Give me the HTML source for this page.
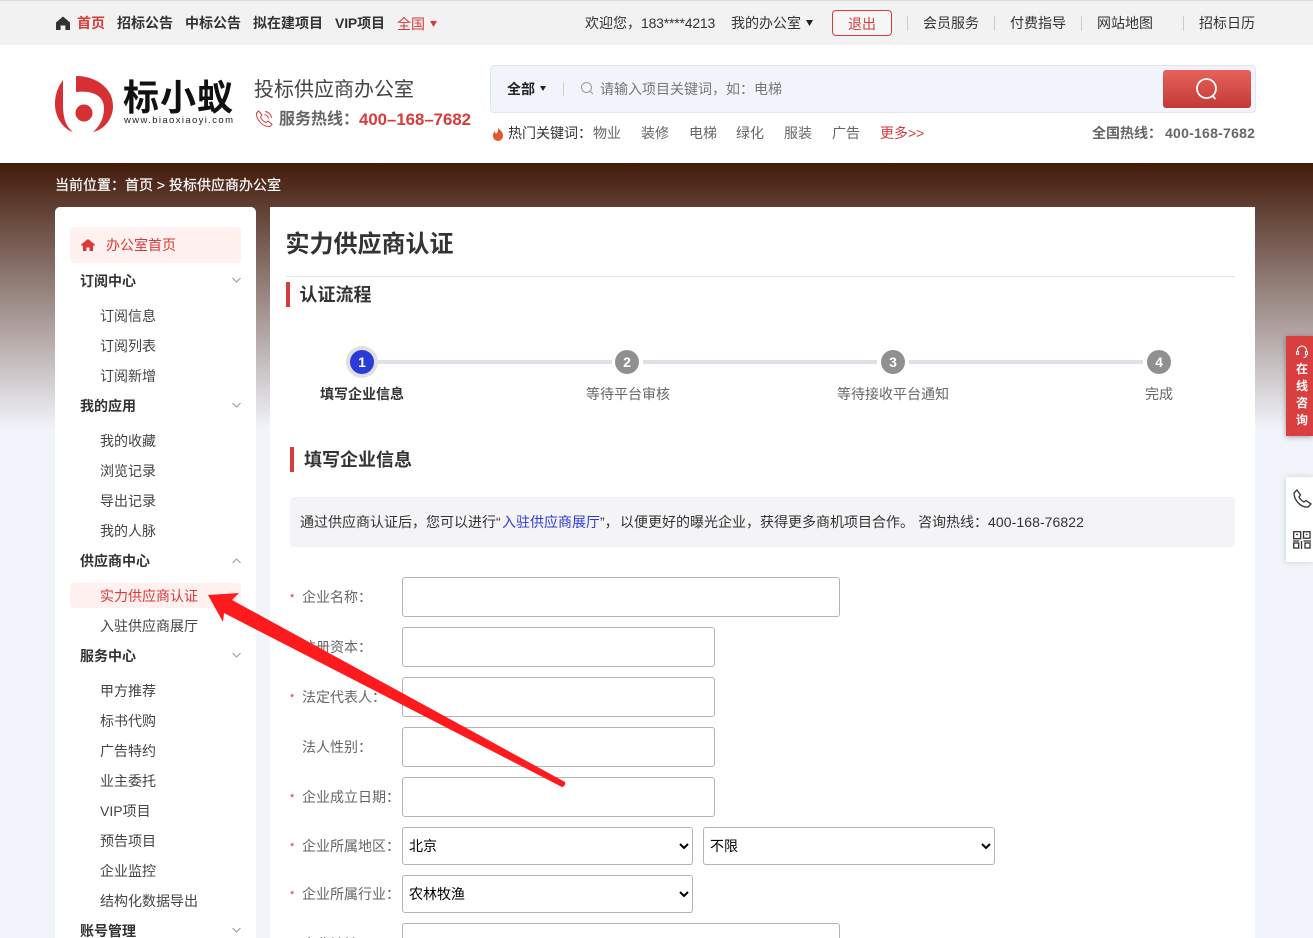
<!DOCTYPE html>
<html lang="zh-CN">
<head>
<meta charset="utf-8">
<title>投标供应商办公室</title>
<style>
*{box-sizing:border-box;margin:0;padding:0}
html,body{width:1313px;height:938px;overflow:hidden;background:#f1f5fb}
body{position:relative;font-family:"Liberation Sans","Noto Sans CJK SC",sans-serif;font-size:14px;color:#333}
.a{position:absolute;white-space:nowrap;line-height:20px}
.b{font-weight:700}
.r{color:#d93a3a}
.g{color:#666}
#top{position:absolute;left:0;top:0;width:1313px;height:45px;background:#f2f2f2;border-top:1px solid #ddd}
#hd{position:absolute;left:0;top:45px;width:1313px;height:118px;background:#fff}
#bg{position:absolute;left:0;top:163px;width:1313px;height:267px;background:linear-gradient(#431a0a 0,#f1f5fb 100%)}
.sep{position:absolute;width:1px;height:15px;background:#ccc;top:16px}
#search{position:absolute;left:490px;top:65px;width:766px;height:48px;background:#f1f5fb;border:1px solid #e3e6ec;border-radius:4px}
#btn{position:absolute;left:1163px;top:70px;width:88px;height:38px;border-radius:3px;background:linear-gradient(#e8615a,#c33a35)}
#side{position:absolute;left:55px;top:207px;width:201px;height:740px;background:#fff;border-radius:5px 5px 0 0}
#main{position:absolute;left:270px;top:207px;width:985px;height:740px;background:#fff}
.pink{position:absolute;background:#fff1ef;border-radius:4px}
.m{left:80px;font-weight:700;color:#333}
.s{left:100px;color:#444}
.line{position:absolute;top:360px;height:4px;background:#e0e0e6}
.dot{position:absolute;top:350px;width:24px;height:24px;border-radius:50%;background:#909090;color:#fff;text-align:center;line-height:24px;font-size:14px;font-weight:700}
.inp{position:absolute;left:402px;height:40px;background:#fff;border:1px solid #b4b4b4;border-radius:3px}
.star{position:absolute;left:290px;color:#d93a3a;font-size:11px;line-height:20px}
.lb{position:absolute;left:302px;color:#666;white-space:nowrap;line-height:20px;font-size:14px}
select{position:absolute;height:38px;background:#fff;border:1px solid #b4b4b4;border-radius:3px;font-family:"Liberation Sans","Noto Sans CJK SC",sans-serif;font-size:14px;color:#000;padding-left:2px}
.chev{position:absolute;left:232px}
</style>
</head>
<body>
<div id="top"></div>
<div id="hd"></div>
<div id="bg"></div>

<!-- top bar -->
<svg class="a" style="left:56px;top:16px" width="14" height="14" viewBox="0 0 14 14"><path d="M7 .5 0 6.500V14h4.600V9.500h4.800V14H14V6.500z" fill="#333"/></svg>
<span class="a b r" style="left:77px;top:13px">首页</span>
<span class="a b" style="left:117px;top:13px">招标公告</span>
<span class="a b" style="left:185px;top:13px">中标公告</span>
<span class="a b" style="left:253px;top:13px">拟在建项目</span>
<span class="a b" style="left:335px;top:13px;letter-spacing:-.15px">VIP项目</span>
<span class="a r" style="left:397px;top:14px">全国</span>
<svg class="a" style="left:430px;top:21px" width="7" height="6" viewBox="0 0 7 6"><path d="M0 0h7L3.500 6z" fill="#d93a3a"/></svg>
<span class="a" style="left:585px;top:13px">欢迎您，<span style="letter-spacing:-.2px">183****4213</span></span>
<span class="a" style="left:731px;top:13px">我的办公室</span>
<svg class="a" style="left:806px;top:20px" width="7" height="6" viewBox="0 0 7 6"><path d="M0 0h7L3.500 6z" fill="#222"/></svg>
<div class="a r" style="left:832px;top:10px;width:60px;height:26px;border:1px solid #d93a3a;border-radius:4px;text-align:center;line-height:26px;background:#f7f7f7">退出</div>
<div class="sep" style="left:907px"></div>
<span class="a" style="left:923px;top:13px">会员服务</span>
<div class="sep" style="left:994px"></div>
<span class="a" style="left:1010px;top:13px">付费指导</span>
<div class="sep" style="left:1081px"></div>
<span class="a" style="left:1097px;top:13px">网站地图</span>
<div class="sep" style="left:1183px"></div>
<span class="a" style="left:1199px;top:13px">招标日历</span>

<!-- logo -->
<svg class="a" style="left:55px;top:76px" width="58" height="57" viewBox="0 0 58 57">
<path d="M8 4C2 12 0 20 0 28c0 15 10 26 18 28-6-5-10-11-10-28z" fill="#d62f34"/>
<path d="M21 0c20 0 37 12 37 30 0 14-10 24-20 26 7-6 11-14 11-24 0-12-11-18-28-16z" fill="#d62f34"/>
<circle cx="29" cy="37" r="8.500" fill="#d62f34"/>
</svg>
<span class="a" style="left:123px;top:78px;font-size:36px;font-weight:700;line-height:40px;color:#111;letter-spacing:1px">标小蚁</span>
<span class="a" style="left:124px;top:113px;font-size:9.500px;line-height:15px;letter-spacing:1.380px;color:#222">www.biaoxiaoyi.com</span>
<span class="a" style="left:254px;top:77px;font-size:20px;line-height:26px;color:#444">投标供应商办公室</span>
<svg class="a" style="left:255px;top:110px" width="18" height="18" viewBox="0 0 18 18" fill="none" stroke="#d93a3a" stroke-width="1"><path d="M1.500 3 3.700 1 7 5 5.500 7c1 2.500 3 4.500 5.500 5.500L13 11l4 3.300-2 2.200C8 17 1 10 1.500 3z"/><path d="M9.500 4.500c2 .2 3.800 2 4 4M10 1.500c3.500.3 6.200 3 6.500 6.500"/></svg>
<span class="a b g" style="left:279px;top:110px;font-size:16px">服务热线：</span>
<span class="a b r" style="left:359px;top:110px;font-size:16.800px">400–168–7682</span>

<!-- search -->
<div id="search"></div>
<span class="a b" style="left:507px;top:79px;color:#222">全部</span>
<svg class="a" style="left:540px;top:86px" width="6" height="5" viewBox="0 0 6 5"><path d="M0 0h6L3 5z" fill="#222"/></svg>
<div class="a" style="left:563px;top:82px;width:1px;height:14px;background:#ccc"></div>
<svg class="a" style="left:580px;top:81px" width="15" height="15" viewBox="0 0 15 15" fill="none" stroke="#999" stroke-width="1"><circle cx="6.500" cy="6.500" r="5"/><path d="m10 10 3 3"/></svg>
<span class="a" style="left:600px;top:79px;color:#777">请输入项目关键词，如：电梯</span>
<div id="btn"></div>
<svg class="a" style="left:1195px;top:77px" width="24" height="24" viewBox="0 0 24 24" fill="none" stroke="#fff" stroke-width="1.800"><circle cx="11.500" cy="11.500" r="9.500"/><path d="m17.500 19 3 3"/></svg>

<svg class="a" style="left:492px;top:127px" width="12" height="14" viewBox="0 0 12 14"><path d="M6 0c1 3 5 4 5 8.500C11 12 8.500 14 6 14S1 12 1 8.500C1 6.500 2 5 3 4c0 1.500.5 2.500 1.500 2.500C6 5 6.500 3 6 0z" fill="#e2572e"/></svg>
<span class="a" style="left:508px;top:123px;color:#333">热门关键词：</span>
<span class="a g" style="left:593px;top:123px">物业</span>
<span class="a g" style="left:641px;top:123px">装修</span>
<span class="a g" style="left:689px;top:123px">电梯</span>
<span class="a g" style="left:736px;top:123px">绿化</span>
<span class="a g" style="left:784px;top:123px">服装</span>
<span class="a g" style="left:832px;top:123px">广告</span>
<span class="a r" style="left:880px;top:123px">更多&gt;&gt;</span>
<span class="a b g" style="left:1092px;top:123px">全国热线：</span>
<span class="a b g" style="left:1165px;top:123px;letter-spacing:.25px">400-168-7682</span>

<!-- breadcrumb -->
<span class="a" style="left:55px;top:175px;color:#fff;-webkit-text-stroke:.2px #fff">当前位置：首页 &gt; 投标供应商办公室</span>

<!-- sidebar -->
<div id="side"></div>
<div class="pink" style="left:70px;top:227px;width:171px;height:36px"></div>
<svg class="a" style="left:81px;top:239px" width="14" height="12" viewBox="0 0 14 12"><path d="M7 0 0 5.500 1 7l1-.7V12h3.500V8.500h3V12H12V6.300l1 .7 1-1.500z" fill="#d93a3a"/></svg>
<span class="a r" style="left:106px;top:235px">办公室首页</span>

<span class="a m" style="top:271px">订阅中心</span>
<span class="a s" style="top:306px">订阅信息</span>
<span class="a s" style="top:336px">订阅列表</span>
<span class="a s" style="top:366px">订阅新增</span>
<span class="a m" style="top:396px">我的应用</span>
<span class="a s" style="top:431px">我的收藏</span>
<span class="a s" style="top:461px">浏览记录</span>
<span class="a s" style="top:491px">导出记录</span>
<span class="a s" style="top:521px">我的人脉</span>
<span class="a m" style="top:551px">供应商中心</span>
<div class="pink" style="left:70px;top:583px;width:171px;height:25px"></div>
<span class="a r" style="left:100px;top:586px">实力供应商认证</span>
<span class="a s" style="top:616px">入驻供应商展厅</span>
<span class="a m" style="top:646px">服务中心</span>
<span class="a s" style="top:681px">甲方推荐</span>
<span class="a s" style="top:711px">标书代购</span>
<span class="a s" style="top:741px">广告特约</span>
<span class="a s" style="top:771px">业主委托</span>
<span class="a s" style="top:801px">VIP项目</span>
<span class="a s" style="top:831px">预告项目</span>
<span class="a s" style="top:861px">企业监控</span>
<span class="a s" style="top:891px">结构化数据导出</span>
<span class="a m" style="top:921px">账号管理</span>
<svg class="chev" style="top:277px" width="9" height="6" viewBox="0 0 9 6" fill="none" stroke="#999"><path d="m.5 1 4 4 4-4"/></svg>
<svg class="chev" style="top:402px" width="9" height="6" viewBox="0 0 9 6" fill="none" stroke="#999"><path d="m.5 1 4 4 4-4"/></svg>
<svg class="chev" style="top:558px" width="9" height="6" viewBox="0 0 9 6" fill="none" stroke="#999"><path d="m.5 5 4-4 4 4"/></svg>
<svg class="chev" style="top:652px" width="9" height="6" viewBox="0 0 9 6" fill="none" stroke="#999"><path d="m.5 1 4 4 4-4"/></svg>
<svg class="chev" style="top:927px" width="9" height="6" viewBox="0 0 9 6" fill="none" stroke="#999"><path d="m.5 1 4 4 4-4"/></svg>

<!-- main -->
<div id="main"></div>
<span class="a b" style="left:285.500px;top:230px;font-size:24px;line-height:30px;color:#333">实力供应商认证</span>
<div class="a" style="left:286px;top:276px;width:949px;height:1px;background:#e5e5e5"></div>
<div class="a" style="left:286px;top:282px;width:4px;height:25px;background:#d93a3a"></div>
<span class="a b" style="left:299.500px;top:283px;font-size:18px;line-height:24px;color:#333">认证流程</span>

<div class="line" style="left:378px;width:234px"></div>
<div class="line" style="left:643px;width:234px"></div>
<div class="line" style="left:909px;width:234px"></div>
<div class="a" style="left:346px;top:346px;width:32px;height:32px;border-radius:50%;background:#dfe0e8"></div>
<div class="dot" style="left:350px;background:#2b3bd9">1</div>
<div class="dot" style="left:615px">2</div>
<div class="dot" style="left:881px">3</div>
<div class="dot" style="left:1147px">4</div>
<span class="a b" style="left:320px;top:384px">填写企业信息</span>
<span class="a g" style="left:586px;top:384px">等待平台审核</span>
<span class="a g" style="left:837px;top:384px">等待接收平台通知</span>
<span class="a g" style="left:1145px;top:384px">完成</span>

<div class="a" style="left:290px;top:447px;width:4px;height:25px;background:#d93a3a"></div>
<span class="a b" style="left:304px;top:448px;font-size:18px;line-height:24px;color:#333">填写企业信息</span>

<div class="a" style="left:290px;top:497px;width:945px;height:50px;background:#f4f4f7;border-radius:4px"></div>
<span class="a" style="left:300px;top:512px">通过供应商认证后，您可以进行“</span>
<span class="a" style="left:502px;top:512px;color:#2b3bd9">入驻供应商展厅</span>
<span class="a" style="left:600px;top:512px">”，</span>
<span class="a" style="left:620px;top:512px">以便更好的曝光企业，获得更多商机项目合作。</span>
<span class="a" style="left:918px;top:512px">咨询热线：</span>
<span class="a" style="left:988px;top:512px;letter-spacing:.08px">400-168-76822</span>

<span class="star" style="top:588px">*</span><span class="lb" style="top:587px">企业名称：</span>
<div class="inp" style="top:577px;width:438px"></div>
<span class="lb" style="top:637px">注册资本：</span>
<div class="inp" style="top:627px;width:313px"></div>
<span class="star" style="top:688px">*</span><span class="lb" style="top:687px">法定代表人：</span>
<div class="inp" style="top:677px;width:313px"></div>
<span class="lb" style="top:737px">法人性别：</span>
<div class="inp" style="top:727px;width:313px"></div>
<span class="star" style="top:788px">*</span><span class="lb" style="top:787px">企业成立日期：</span>
<div class="inp" style="top:777px;width:313px"></div>
<span class="star" style="top:837px">*</span><span class="lb" style="top:836px">企业所属地区：</span>
<select style="left:402px;top:827px;width:291px"><option>北京</option></select>
<select style="left:703px;top:827px;width:292px"><option>不限</option></select>
<span class="star" style="top:885px">*</span><span class="lb" style="top:884px">企业所属行业：</span>
<select style="left:402px;top:875px;width:291px"><option>农林牧渔</option></select>
<span class="lb" style="top:934px">企业地址：</span>
<div class="inp" style="top:923px;width:438px"></div>

<!-- right float -->
<div class="a" style="left:1286px;top:336px;width:27px;height:100px;background:#d93f3f;box-shadow:0 1px 5px rgba(0,0,0,.35)"></div>
<svg class="a" style="left:1295px;top:345px" width="14" height="14" viewBox="0 0 14 14" fill="none" stroke="#fff" stroke-width="1.100"><path d="M2.500 7V5.500a4.500 4.500 0 0 1 9 0V7"/><path d="M3.500 6.500h-1a1 1 0 0 0-1 1v1a1 1 0 0 0 1 1h1zM10.500 6.500h1a1 1 0 0 1 1 1v1a1 1 0 0 1-1 1h-1z"/><path d="M11.500 9.500c0 2-1 3-3 3"/></svg>
<div class="a" style="left:1295px;top:361px;width:14px;color:#fff;font-size:12px;font-weight:700;line-height:17px;white-space:normal;text-align:center">在<br>线<br>咨<br>询</div>
<div class="a" style="left:1286px;top:477px;width:27px;height:85px;background:#fff;box-shadow:0 0 6px rgba(0,0,0,.15)"></div>
<svg class="a" style="left:1293px;top:489px" width="20" height="20" viewBox="0 0 20 20" fill="none" stroke="#333" stroke-width="1.300"><path d="M1 4 4 1l3.500 5L6 8c1 2 3 4 5 5l2-1.500 5 3.500-3 3C8 19 1 11 1 4z"/></svg>
<svg class="a" style="left:1293px;top:531px" width="18" height="18" viewBox="0 0 18 18" fill="none" stroke="#333" stroke-width="1.300"><rect x=".7" y=".7" width="7" height="7"/><rect x="10.500" y=".7" width="6.500" height="6.500"/><rect x=".7" y="12" width="5" height="5"/><rect x="12" y="12" width="5" height="5"/><path d="M3 3.500h2M13 3.500h1.500M0 10h6M8.500 10v8M10.500 10H18"/></svg>

<!-- annotation arrow -->
<svg class="a" style="left:0;top:0" width="1313" height="938" viewBox="0 0 1313 938">
<path d="M208 595 239 593 232 600 565 782Q566 786 562 787L224 613 223 622z" fill="#fe1a1d"/>
</svg>
</body>
</html>
